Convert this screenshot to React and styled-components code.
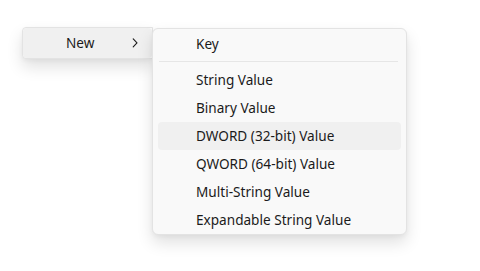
import React from 'react'
import styled, { createGlobalStyle } from 'styled-components'

const Global = createGlobalStyle`
	html, body {
		margin: 0;
		background: #ffffff;
	}
	body {
		font-family: 'Noto Sans', 'Segoe UI', sans-serif;
		font-size: 13.6px;
		color: #1b1b1b;
	}
`

const Stage = styled.div`
	display: flex;
	align-items: flex-start;
	padding: 27px 0 0 22px;
	height: 271px;
	box-sizing: border-box;
`

const Panel = styled.div`
	background: #f9f9f9;
	border: 1px solid #e3e3e3;
	border-radius: 6px;
	box-shadow: 0 8px 16px rgba(0, 0, 0, 0.12), 0 2px 4px rgba(0, 0, 0, 0.04);
	box-sizing: border-box;
`

const ParentMenu = styled(Panel)`
	width: 131px;
	overflow: hidden;
	border-radius: 4px 0 0 4px;
`

const SubMenu = styled(Panel)`
	width: 255px;
	margin-left: -1px;
	margin-top: 1px;
	padding-top: 1px;
	position: relative;
	z-index: 1;
`

const Item = styled.div`
	display: flex;
	align-items: center;
	height: ${p => p.$h ?? 28}px;
	margin: 0 ${p => p.$inset ?? 5}px;
	padding-left: ${p => 43 - (p.$inset ?? 5)}px;
	padding-right: ${p => p.$pr ?? 14}px;
	border-radius: 4px;
	background: ${p => (p.$active ? '#f0f0f0' : 'transparent')};
	white-space: nowrap;
`

const Label = styled.span`
	flex: 1;
	line-height: 1;
`

const Chevron = styled.svg`
	width: 10px;
	height: 10px;
`

const Separator = styled.div`
	height: 1px;
	margin: 3px 8px 4px 6px;
	background: #e6e6e6;
`

const values = [
	'String Value',
	'Binary Value',
	'DWORD (32-bit) Value',
	'QWORD (64-bit) Value',
	'Multi-String Value',
	'Expandable String Value'
]

export default function App() {
	return (
		<>
			<Global />
			<Stage>
				<ParentMenu>
					<Item $active $inset={0} $h={30} $pr={12}>
						<Label>New</Label>
						<Chevron viewBox="0 0 10 10">
							<path
								d="M3.2 0.8 L7 4.8 L3.2 8.8"
								fill="none"
								stroke="#1b1b1b"
								strokeWidth="1.1"
								strokeLinecap="round"
								strokeLinejoin="round"
							/>
						</Chevron>
					</Item>
				</ParentMenu>
				<SubMenu>
					<Item>
						<Label>Key</Label>
					</Item>
					<Separator />
					{values.map(v => (
						<Item key={v} $active={v.startsWith('DWORD')}>
							<Label>{v}</Label>
						</Item>
					))}
				</SubMenu>
			</Stage>
		</>
	)
}
